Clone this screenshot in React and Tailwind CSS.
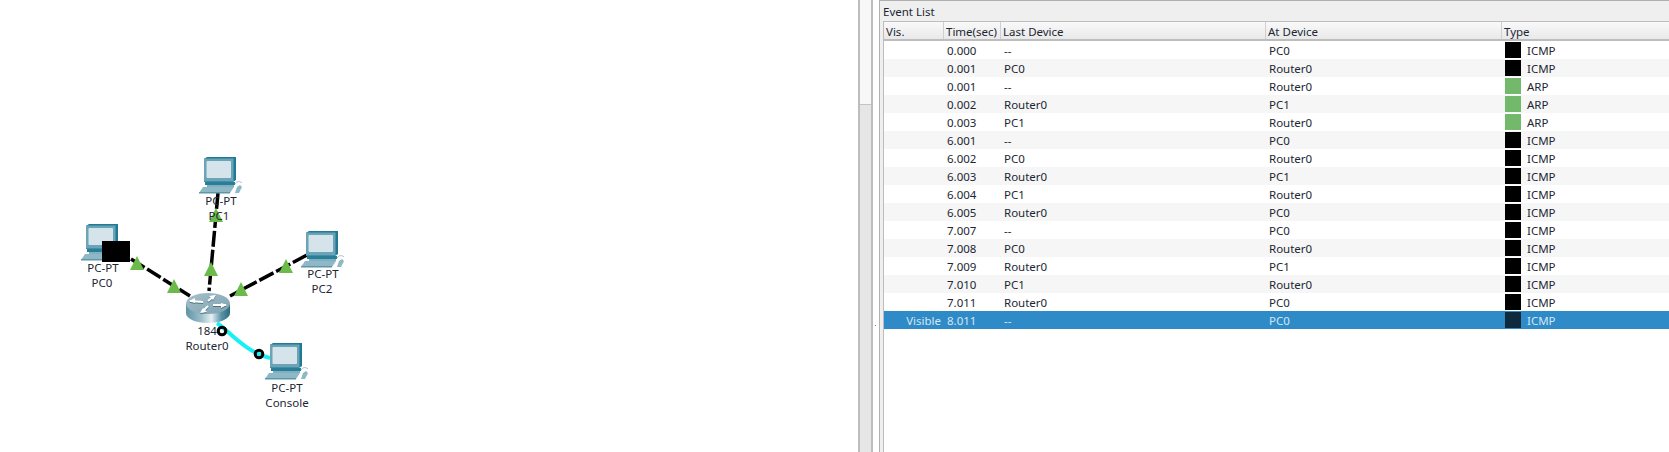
import React from 'react';

const rows = [
  ['', '0.000', '--', 'PC0', 'ICMP'],
  ['', '0.001', 'PC0', 'Router0', 'ICMP'],
  ['', '0.001', '--', 'Router0', 'ARP'],
  ['', '0.002', 'Router0', 'PC1', 'ARP'],
  ['', '0.003', 'PC1', 'Router0', 'ARP'],
  ['', '6.001', '--', 'PC0', 'ICMP'],
  ['', '6.002', 'PC0', 'Router0', 'ICMP'],
  ['', '6.003', 'Router0', 'PC1', 'ICMP'],
  ['', '6.004', 'PC1', 'Router0', 'ICMP'],
  ['', '6.005', 'Router0', 'PC0', 'ICMP'],
  ['', '7.007', '--', 'PC0', 'ICMP'],
  ['', '7.008', 'PC0', 'Router0', 'ICMP'],
  ['', '7.009', 'Router0', 'PC1', 'ICMP'],
  ['', '7.010', 'PC1', 'Router0', 'ICMP'],
  ['', '7.011', 'Router0', 'PC0', 'ICMP'],
  ['Visible', '8.011', '--', 'PC0', 'ICMP'],
];

const triangles = [
  [137, 256], [174, 279], [211, 262], [216, 208], [286, 259], [241, 282],
];

// PC-PT device, origin is the top left of the drawing
const Pc = ({ x, y }) => (
  <g transform={`translate(${x} ${y})`}>
    <polygon points="5,2 8,0 37,0 37,23 34,25 5,25" fill="#1f7a94" />
    <rect x="5" y="1.500" width="29.500" height="23" fill="#6ba3b7" />
    <rect x="7.500" y="4" width="24.500" height="17" rx="1" fill="#d5e4eb" />
    <polygon points="6,25 36,25 36,28 6,28" fill="#2a7d96" />
    <rect x="8" y="28" width="27" height="2" fill="#7fb0c1" />
    <polygon points="4,30 35,30 31,36 0,36" fill="#8fb8c7" />
    <rect x="0" y="35" width="31" height="1.500" fill="#5f95a8" />
    <path d="M36 27 C38 24 41 24 43 26" fill="none" stroke="#9dbfca" strokeWidth="1" />
    <polygon points="38,30 41,28 43,30 40,36 36,36" fill="#8fb8c7" />
  </g>
);

const RouterArrows = ({ color, dy = 0 }) => (
  <g transform={`translate(0 ${dy})`}>
    <g stroke={color} strokeWidth="2" fill="none">
      <path d="M190 301 L203 302" />
      <path d="M226 305 L213 305" />
      <path d="M214 296 L208 301" />
      <path d="M202 312 L208 306" />
    </g>
    <g fill={color}>
      <polygon points="189,301 195,298 195,303" />
      <polygon points="227,305 221,303 221,308" />
      <polygon points="216,295 209,296 213,300" />
      <polygon points="200,313 207,312 203,308" />
    </g>
  </g>
);

const Label = ({ cx, top, children }) => (
  <div className="absolute -translate-x-1/2 whitespace-nowrap text-[11.5px] leading-[16px] text-[#1c2733]" style={{ left: cx, top }}>
    {children}
  </div>
);

const Canvas = () => (
  <div className="relative h-full w-[858px] bg-white">
    <svg className="absolute left-0 top-0" width="858" height="452">
      <defs>
        <linearGradient id="routerSide" x1="0" y1="0" x2="1" y2="0">
          <stop offset="0" stopColor="#5f93a5" />
          <stop offset="0.35" stopColor="#9dbfca" />
          <stop offset="0.58" stopColor="#e6f0f3" />
          <stop offset="0.8" stopColor="#5d93a6" />
          <stop offset="1" stopColor="#2c6a80" />
        </linearGradient>
        <linearGradient id="routerTop" x1="0" y1="0" x2="1" y2="1">
          <stop offset="0" stopColor="#a5c0ca" />
          <stop offset="1" stopColor="#7ea2b1" />
        </linearGradient>
      </defs>

      <g stroke="#000" strokeWidth="3.500" strokeDasharray="16 3" fill="none">
        <line x1="131" y1="259" x2="190" y2="296" />
        <line x1="218" y1="193" x2="209" y2="291" />
        <line x1="307" y1="255" x2="230" y2="296" />
      </g>
      <path d="M217 323 C228 330 245 352 270 358" fill="none" stroke="#19f0f5" strokeWidth="4" />

      <Pc x={81} y={224} />
      <Pc x={199} y={157} />
      <Pc x={301} y={231} />
      <Pc x={265} y={343} />

      <path d="M186 304 V313 C186 319 196 323 208 323 C220 323 230 319 230 313 V304 Z" fill="url(#routerSide)" />
      <ellipse cx="208" cy="303.500" rx="22" ry="10.500" fill="url(#routerTop)" />
      <RouterArrows color="#4f7585" dy={1} />
      <RouterArrows color="#fff" />

      {triangles.map(([cx, top]) => (
        <polygon key={`${cx}-${top}`} points={`${cx},${top} ${cx + 7},${top + 14} ${cx - 7},${top + 14}`} fill="#6cba4a" />
      ))}

      <rect x="102" y="241" width="28" height="21" fill="#000" />
      <circle cx="222" cy="331" r="3.800" fill="none" stroke="#000" strokeWidth="3" />
      <circle cx="259" cy="354" r="3.800" fill="none" stroke="#000" strokeWidth="3" />
    </svg>

    <Label cx={103} top={260}>PC-PT</Label>
    <Label cx={102} top={275}>PC0</Label>
    <Label cx={221} top={193}>PC-PT</Label>
    <Label cx={219} top={208}>PC1</Label>
    <Label cx={323} top={266}>PC-PT</Label>
    <Label cx={322} top={281}>PC2</Label>
    <Label cx={287} top={380}>PC-PT</Label>
    <Label cx={287} top={395}>Console</Label>
    <Label cx={207} top={323}>184</Label>
    <Label cx={207} top={338}>Router0</Label>
  </div>
);

const Scrollbar = () => (
  <div className="flex h-full w-[15px] flex-col border-x-2 border-[#bdbdbd] bg-[#e6e6e6]">
    <div className="h-[105px] border-b border-[#c4c4c4] bg-[#f8f8f8]" />
  </div>
);

const Splitter = () => (
  <div className="relative h-full w-[6px] bg-white">
    <div className="absolute left-[2px] top-[325px] h-px w-px bg-[#888]" />
  </div>
);

const EventList = () => (
  <div className="flex h-full flex-1 flex-col border-l border-t border-[#b0b0b0] bg-[#efefef] text-[11.5px] text-[#1c2733]">
    <div className="h-[20px] pl-[3px] pt-[2px] leading-[18px]">Event List</div>
    <div className="ml-[3px] flex-1 border-l border-t border-[#bdbdbd] bg-white">
      <div className="grid h-[19px] grid-cols-[60px_57px_265px_236px_1fr] overflow-hidden border-b-2 border-[#bdbdbd] bg-gradient-to-b from-[#f9f9f9] to-[#e9e9e9] leading-[20px]">
        <div className="border-r border-[#cfcfcf] pl-[2px]">Vis.</div>
        <div className="border-r border-[#cfcfcf] pl-[2px]">Time(sec)</div>
        <div className="border-r border-[#cfcfcf] pl-[2px]">Last Device</div>
        <div className="border-r border-[#cfcfcf] pl-[2px]">At Device</div>
        <div className="pl-[2px]">Type</div>
      </div>
      {rows.map((r, i) => {
        const selected = r[0] !== '';
        const bg = selected ? 'bg-[#2f8bc7] text-[#d2e6f3]' : i % 2 === 1 ? 'bg-[#f6f6f6]' : 'bg-white';
        const swatch = selected ? 'bg-[#0f2a3d]' : r[4] === 'ARP' ? 'bg-[#72b96c]' : 'bg-black';
        return (
          <div key={i} className={`grid h-[18px] grid-cols-[60px_57px_265px_236px_1fr] overflow-hidden leading-[20px] ${bg}`}>
            <div className="pr-[3px] text-right">{r[0]}</div>
            <div className="pl-[3px]">{r[1]}</div>
            <div className="pl-[3px]">{r[2]}</div>
            <div className="pl-[3px]">{r[3]}</div>
            <div className="flex h-[18px] items-center pl-[3px]">
              <span className={`h-[16px] w-[16px] ${swatch}`} />
              <span className="ml-[6px] pt-[1px]">{r[4]}</span>
            </div>
          </div>
        );
      })}
    </div>
  </div>
);

export default function App() {
  return (
    <div className="flex h-[452px] w-[1669px] overflow-hidden bg-white" style={{ fontFamily: '"Noto Sans", sans-serif' }}>
      <Canvas />
      <Scrollbar />
      <Splitter />
      <EventList />
    </div>
  );
}
